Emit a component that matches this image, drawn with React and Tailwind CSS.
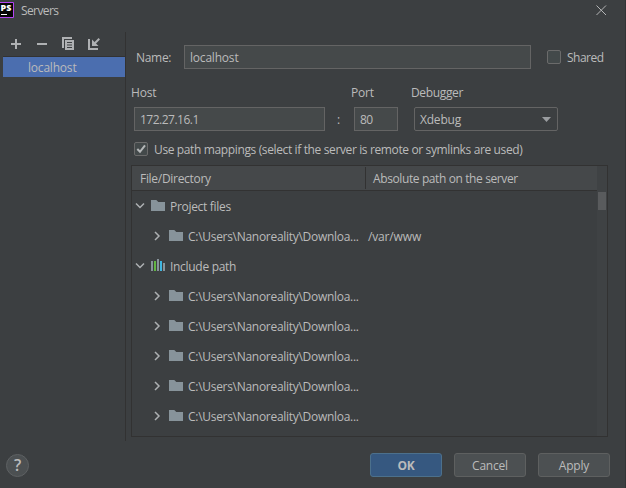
import React from "react";

const border = "border border-[#646464]";

function Label({ className = "", children }) {
  return <span className={`block pt-[2px] ${className}`}>{children}</span>;
}

function Chevron({ open }) {
  return (
    <svg width="10" height="10" viewBox="0 0 10 10" fill="none" stroke="#adb0b2" strokeWidth="1.5" className="shrink-0">
      <path d={open ? "M1 2.5L5 6.5L9 2.5" : "M3 1L7 5L3 9"} />
    </svg>
  );
}

function Folder() {
  return (
    <svg width="14" height="11" viewBox="0 0 14 11" className="shrink-0">
      <path d="M0 0H5.3L7.3 2H14V11H0Z" fill="#87939a" />
    </svg>
  );
}

function Library() {
  return (
    <svg width="14" height="12" viewBox="0 0 14 12" className="shrink-0" shapeRendering="crispEdges">
      <path d="M0 2h2v10H0zM6 0h2v12H6zM12 4h2v8h-2z" fill="#87939a" />
      <path d="M3 2h2v10H3z" fill="#62b543" />
      <path d="M9 2h2v10H9z" fill="#40b6e0" />
    </svg>
  );
}

function Checkbox({ checked }) {
  return (
    <span className="flex h-[14px] w-[14px] shrink-0 rounded-[2px] border border-[#6b6b6b] bg-[#43494a]">
      {checked && (
        <svg width="12" height="12" viewBox="0 0 12 12" fill="none" stroke="#b4b7b8" strokeWidth="2">
          <path d="M2.3 6L5 8.8L10 2.3" />
        </svg>
      )}
    </span>
  );
}

function PathRow({ server }) {
  return (
    <div className="flex h-[30px] items-center pl-[20px]">
      <Chevron />
      <span className="ml-[7px] flex pb-px">
        <Folder />
      </span>
      <Label className="ml-[5px] w-[180px] tracking-[-0.29px]">C:\Users\Nanoreality\Downloa...</Label>
      <Label className="tracking-[-0.15px]">{server}</Label>
    </div>
  );
}

export default function App() {
  return (
    <div className="flex h-[488px] w-[626px] flex-col overflow-hidden whitespace-pre border-r border-[#323436] bg-[#3c3f41] font-['Open_Sans','Noto_Sans',sans-serif] text-[12px] leading-[16px] tracking-[-0.2px] text-[#bbbbbb]">
      <header className="flex h-[32px] shrink-0 items-start">
        <svg width="14" height="18" viewBox="0 0 14 18" className="shrink-0">
          <path d="M-1 2.5H13.5V17.5H-1Z" fill="#050505" stroke="#b345f1" />
          <text x="0.5" y="11.2" fill="#fff" fontFamily="Open Sans" fontSize="9" fontWeight="800" letterSpacing="0" textLength="10.8" lengthAdjust="spacingAndGlyphs">PS</text>
          <path d="M1 14h6v1H1z" fill="#fff" />
        </svg>
        <span className="ml-[7px] mt-[3px] tracking-[-0.6px]">Servers</span>
        <svg width="11" height="11" viewBox="0 0 11 11" className="ml-auto mr-[18px] mt-[5px]" stroke="#b4b6b7" strokeWidth="1">
          <path d="M.5 .5L10 10M10 .5L.5 10" />
        </svg>
      </header>

      <div className="flex h-[409px] shrink-0">
        <aside className="w-[126px] shrink-0 border-r border-[#323232]">
          <div className="flex h-[24px] items-center pl-[11px]">
            <svg width="90" height="14" viewBox="0 0 90 14" fill="none" stroke="#afb1b3">
              <path d="M0 7H10M5 2V12M26 7H36" strokeWidth="2" />
              <path d="M51 0H61V2H53V11H51Z" fill="#afb1b3" stroke="none" />
              <path d="M54 3H63V13H54ZM56 5V6H61V5ZM56 7.5V8.5H61V7.5ZM56 10V11H61V10Z" fill="#afb1b3" fillRule="evenodd" stroke="none" />
              <path d="M78 2V12H87" strokeWidth="2" />
              <path d="M88.3 1.7L83 7" strokeWidth="2" />
              <path d="M81 2.5V9H87.5Z" fill="#afb1b3" stroke="none" />
            </svg>
          </div>
          <div className="ml-[3px] flex h-[21px] items-center border-t border-[#323232] bg-[#4b6eaf] pl-[25px]">
            <Label>localhost</Label>
          </div>
        </aside>

        <main className="flex min-w-0 flex-1 flex-col pl-[5px] pt-[13px]">
          <div className="flex h-[24px] items-center pl-[5px]">
            <Label className="w-[48px] tracking-[-0.3px]">Name:</Label>
            <div className={`${border} flex h-[24px] w-[347px] items-center bg-[#45494a] pl-[5px]`}>
              <Label>localhost</Label>
            </div>
            <span className="ml-[16px] mr-[6px]"><Checkbox /></span>
            <Label className="tracking-[-0.5px]">Shared</Label>
          </div>

          <div className="mt-[14px] flex h-[24px]">
            <Label className="w-[220px]">Host</Label>
            <Label className="w-[60px]">Port</Label>
            <Label className="tracking-[-0.35px]">Debugger</Label>
          </div>
          <div className="flex h-[24px] items-center pl-[3px]">
            <div className={`${border} flex h-[24px] w-[191px] items-center bg-[#45494a] pl-[5px]`}>
              <Label className="tracking-[-0.5px]">172.27.16.1</Label>
            </div>
            <Label className="w-[29px] pl-[12px]">:</Label>
            <div className={`${border} flex h-[24px] w-[44px] items-center bg-[#45494a] pl-[5px]`}>
              <Label className="tracking-[-0.5px]">80</Label>
            </div>
            <div className={`${border} ml-[16px] flex h-[24px] w-[144px] items-center justify-between rounded-[2px] bg-[#3c3f41] pl-[5px] pr-[6px]`}>
              <Label>Xdebug</Label>
              <svg width="9" height="5" viewBox="0 0 9 5"><path d="M0 0H9L4.5 5Z" fill="#9a9da0" /></svg>
            </div>
          </div>

          <div className="mt-[11px] flex h-[14px] items-center pl-[3px]">
            <Checkbox checked />
            <Label className="ml-[6px] tracking-[-0.37px]">Use path mappings (select if the server is remote or symlinks are used)</Label>
          </div>

          <section className="mt-[9px] flex h-[272px] w-[477px] border border-[#323232]">
            <div className="flex w-[465px] flex-col">
              <div className="flex h-[25px] shrink-0 items-center border-b border-[#323232] bg-[#45484a]">
                <div className="flex h-[22px] w-[234px] items-center border-r border-[#323232] pl-[8px]">
                  <Label className="tracking-[-0.3px]">File/Directory</Label>
                </div>
                <Label className="pl-[7px] tracking-[-0.39px]">Absolute path on the server</Label>
              </div>
              <div className="flex h-[30px] items-center pl-[3px]">
                <Chevron open />
                <span className="ml-[6px] flex pb-px"><Folder /></span>
                <Label className="ml-[5px] tracking-[-0.3px]">Project files</Label>
              </div>
              <PathRow server="/var/www" />
              <div className="flex h-[30px] items-center pl-[3px]">
                <Chevron open />
                <span className="ml-[6px] flex pb-[2px]"><Library /></span>
                <Label className="ml-[5px] tracking-[-0.3px]">Include path</Label>
              </div>
              {[0, 1, 2, 3, 4].map((i) => <PathRow key={i} />)}
            </div>
            <div className="flex-1 bg-[#3f4244] pt-[26px]">
              <div className="ml-px h-[18px] w-[8px] bg-[#595b5d]" />
            </div>
          </section>
        </main>
      </div>

      <footer className="flex flex-1 items-start pl-[6px] pr-[15px] pt-[12px]">
        <div className="mt-px flex h-[23px] w-[23px] items-center justify-center rounded-full border border-[#5e6163] bg-[#4c5052] pb-px text-[16px] font-semibold leading-none">?</div>
        <div className="ml-auto flex gap-[12px]">
          <div className="flex h-[24px] w-[72px] items-center justify-center rounded-[3px] border border-[#4c708c] bg-[#365880] font-bold">
            <Label>OK</Label>
          </div>
          <div className="flex h-[24px] w-[72px] items-center justify-center rounded-[3px] border border-[#5e6060] bg-[#4c5052]">
            <Label>Cancel</Label>
          </div>
          <div className="flex h-[24px] w-[72px] items-center justify-center rounded-[3px] border border-[#5e6060] bg-[#4c5052]">
            <Label>Apply</Label>
          </div>
        </div>
      </footer>
    </div>
  );
}
